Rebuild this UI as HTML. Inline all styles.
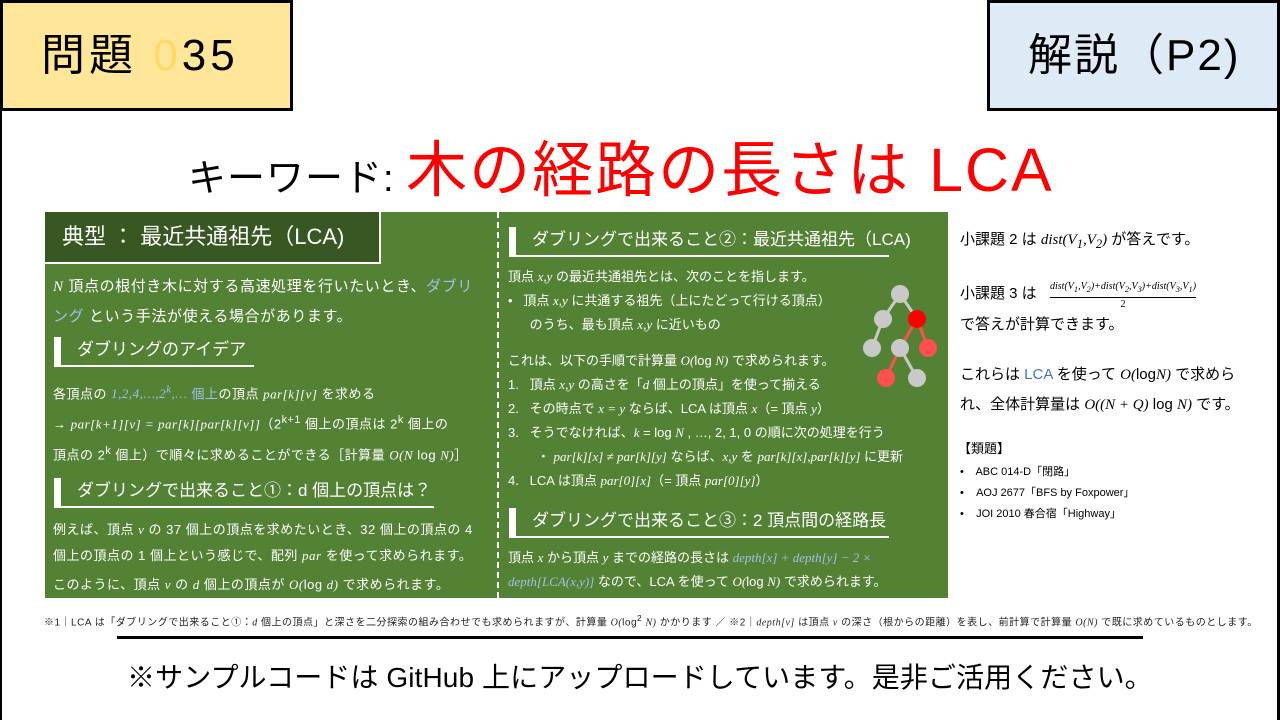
<!DOCTYPE html>
<html><head><meta charset="utf-8"><style>
*{margin:0;padding:0;box-sizing:border-box}
body{width:1280px;height:720px;overflow:hidden;background:#fff;position:relative;font-family:"Liberation Sans","Noto Sans CJK JP",sans-serif;color:#000}
.a{position:absolute;white-space:nowrap}
.m{font-family:"Liberation Serif","Noto Serif CJK SC",serif;font-style:italic}
.w{color:#fff}
.b{color:#9dc3e6}
.h{position:absolute;color:#fff;font-size:17px;border-left:7px solid #fff;height:30px;line-height:26px;padding-left:16px}
.h:after{content:"";position:absolute;left:-7px;bottom:0;height:2px;background:#fff;width:var(--w)}
</style></head><body>
<div class="a" style="left:0;top:0;width:1280px;height:720px;border-left:2px solid #000;border-right:3px solid #000"></div>
<div class="a" style="left:0;top:0;width:293px;height:111px;background:#ffe699;border:3px solid #000;font-size:44px;letter-spacing:4px;line-height:105px;padding-left:38px">問題 <span style="color:#ffd966">0</span>35</div>
<div class="a" style="left:987px;top:0;width:293px;height:111px;background:#deebf7;border:3px solid #000;font-size:44px;letter-spacing:2px;line-height:105px;padding-left:38px">解説（P2)</div>
<div class="a" style="left:188px;top:130px;font-size:38px;letter-spacing:1px;line-height:80px">キーワード: <span style="color:#ff0000;font-size:61px;letter-spacing:2px">木の経路の長さは LCA</span></div>

<div class="a" style="left:45px;top:212px;width:903px;height:386px;background:#548235"></div>
<div class="a" style="left:45px;top:212px;width:336px;height:52px;background:#385723;border:2px solid #fff;border-left:none;border-top:none;color:#fff;font-size:22px;line-height:50px;padding-left:17px">典型 ： 最近共通祖先（LCA)</div>
<div class="a" style="left:497px;top:212px;height:386px;border-left:2px dashed #fff"></div>

<div class="a w" style="left:53px;top:272px;font-size:15px;letter-spacing:0.6px;line-height:29px">
<span class="m">N</span> 頂点の根付き木に対する高速処理を行いたいとき、<span class="b">ダブリ</span><br><span class="b">ング</span> という手法が使える場合があります。</div>
<div class="h" style="left:54px;top:337px;--w:200px">ダブリングのアイデア</div>
<div class="a w" style="left:53px;top:377px;font-size:13px;letter-spacing:0.5px;line-height:26px">
各頂点の <span class="b m">1,2,4,…,2<sup>k</sup>,…</span> <span class="b">個上</span>の頂点 <span class="m">par[k][v]</span> を求める<br>
→ <span class="m">par[k+1][v] = par[k][par[k][v]]</span>（2<sup>k+1</sup> 個上の頂点は 2<sup>k</sup> 個上の<br>
頂点の 2<sup>k</sup> 個上）で順々に求めることができる［計算量 <span class="m">O(N</span> log <span class="m">N)</span>］</div>
<div class="h" style="left:54px;top:478px;--w:380px">ダブリングで出来ること①：d 個上の頂点は？</div>
<div class="a w" style="left:53px;top:517px;font-size:13px;letter-spacing:0.5px;line-height:26px">
例えば、頂点 <span class="m">v</span> の 37 個上の頂点を求めたいとき、32 個上の頂点の 4<br>
個上の頂点の 1 個上という感じで、配列 <span class="m">par</span> を使って求められます。</div>
<div class="a w" style="left:53px;top:572px;font-size:13px;letter-spacing:0.5px;line-height:26px">このように、頂点 <span class="m">v</span> の <span class="m">d</span> 個上の頂点が <span class="m">O(</span>log <span class="m">d)</span> で求められます。</div>

<div class="h" style="left:509px;top:227px;--w:380px">ダブリングで出来ること②：最近共通祖先（LCA)</div>
<div class="a w" style="left:508px;top:265px;font-size:13px;line-height:24px">
頂点 <span class="m">x,y</span> の最近共通祖先とは、次のことを指します。<br>
•&nbsp;&nbsp; 頂点 <span class="m">x,y</span> に共通する祖先（上にたどって行ける頂点）<br>
&nbsp;&nbsp;&nbsp;&nbsp;&nbsp; のうち、最も頂点 <span class="m">x,y</span> に近いもの</div>
<div class="a w" style="left:508px;top:349px;font-size:13px;line-height:24px">
これは、以下の手順で計算量 <span class="m">O(</span>log <span class="m">N)</span> で求められます。<br>
1.&nbsp;&nbsp; 頂点 <span class="m">x,y</span> の高さを「<span class="m">d</span> 個上の頂点」を使って揃える<br>
2.&nbsp;&nbsp; その時点で <span class="m">x = y</span> ならば、LCA は頂点 <span class="m">x</span>（= 頂点 <span class="m">y</span>）<br>
3.&nbsp;&nbsp; そうでなければ、<span class="m">k</span> = log <span class="m">N</span> , …, 2, 1, 0 の順に次の処理を行う<br>
&nbsp;&nbsp;&nbsp;&nbsp;&nbsp;&nbsp;&nbsp; ・ <span class="m">par[k][x] ≠ par[k][y]</span> ならば、<span class="m">x,y</span> を <span class="m">par[k][x],par[k][y]</span> に更新<br>
4.&nbsp;&nbsp; LCA は頂点 <span class="m">par[0][x]</span>（= 頂点 <span class="m">par[0][y]</span>）</div>
<div class="h" style="left:509px;top:508px;--w:380px">ダブリングで出来ること③：2 頂点間の経路長</div>
<div class="a w" style="left:508px;top:546px;font-size:13px;line-height:24px">
頂点 <span class="m">x</span> から頂点 <span class="m">y</span> までの経路の長さは <span class="b m">depth[x] + depth[y] − 2 ×</span><br>
<span class="b m">depth[LCA(x,y)]</span> なので、LCA を使って <span class="m">O(</span>log <span class="m">N)</span> で求められます。</div>
<svg class="a" style="left:855px;top:280px" width="90" height="112">
<g stroke-width="3"><line x1="45" y1="14" x2="28" y2="39" stroke="#c9c9c9"/><line x1="45" y1="14" x2="62" y2="39" stroke="#c9c9c9"/><line x1="28" y1="39" x2="17" y2="68" stroke="#c9c9c9"/><line x1="45" y1="68" x2="62" y2="98" stroke="#c9c9c9"/>
<line x1="62" y1="39" x2="45" y2="68" stroke="#ff5050"/><line x1="62" y1="39" x2="73" y2="68" stroke="#ff5050"/><line x1="45" y1="68" x2="31" y2="98" stroke="#ff5050"/></g>
<circle cx="45" cy="14" r="9" fill="#c9c9c9"/><circle cx="28" cy="39" r="9" fill="#c9c9c9"/><circle cx="62" cy="39" r="9" fill="#f00"/><circle cx="17" cy="68" r="9" fill="#c9c9c9"/><circle cx="45" cy="68" r="9" fill="#c9c9c9"/><circle cx="73" cy="68" r="9" fill="#ff5050"/><circle cx="31" cy="98" r="9" fill="#ff5050"/><circle cx="62" cy="98" r="9" fill="#c9c9c9"/>
</svg>

<div class="a" style="left:960px;top:228px;font-size:15px;line-height:24px">小課題 2 は <span class="m">dist(V<sub>1</sub>,V<sub>2</sub>)</span> が答えです。</div>
<div class="a" style="left:960px;top:282px;font-size:15px;line-height:24px">小課題 3 は</div>
<div class="a m" style="left:1050px;top:280px;font-size:10px;text-align:center;line-height:13px"><div style="border-bottom:1px solid #000;padding-bottom:1px">dist(V<sub>1</sub>,V<sub>2</sub>)+dist(V<sub>2</sub>,V<sub>3</sub>)+dist(V<sub>3</sub>,V<sub>1</sub>)</div><div style="font-style:normal">2</div></div>
<div class="a" style="left:960px;top:313px;font-size:15px;line-height:24px">で答えが計算できます。</div>
<div class="a" style="left:960px;top:360px;font-size:15px;line-height:30px">これらは <span style="color:#4472c4">LCA</span> を使って <span class="m">O(</span>log<span class="m">N)</span> で求めら<br>れ、全体計算量は <span class="m">O((N + Q)</span> log <span class="m">N)</span> です。</div>
<div class="a" style="left:958px;top:439px;font-size:13px;line-height:20px">【類題】</div>
<div class="a" style="left:960px;top:462px;font-size:11px;line-height:21px">•&nbsp;&nbsp;&nbsp; ABC 014-D「閉路」<br>•&nbsp;&nbsp;&nbsp; AOJ 2677「BFS by Foxpower」<br>•&nbsp;&nbsp;&nbsp; JOI 2010 春合宿「Highway」</div>

<div class="a" style="left:44px;top:611px;font-size:10px;letter-spacing:0.5px;color:#222;line-height:14px">※1｜LCA は「ダブリングで出来ること①：<span class="m">d</span> 個上の頂点」と深さを二分探索の組み合わせでも求められますが、計算量 <span class="m">O(</span>log<sup>2</sup> <span class="m">N)</span> かかります ／ ※2｜<span class="m">depth[v]</span> は頂点 <span class="m">v</span> の深さ（根からの距離）を表し、前計算で計算量 <span class="m">O(N)</span> で既に求めているものとします。</div>
<div class="a" style="left:117px;top:636px;width:1026px;height:3px;background:#000"></div>
<div class="a" style="left:127px;top:656px;font-size:28px;letter-spacing:0.1px;line-height:44px">※サンプルコードは GitHub 上にアップロードしています。是非ご活用ください。</div>
</body></html>
